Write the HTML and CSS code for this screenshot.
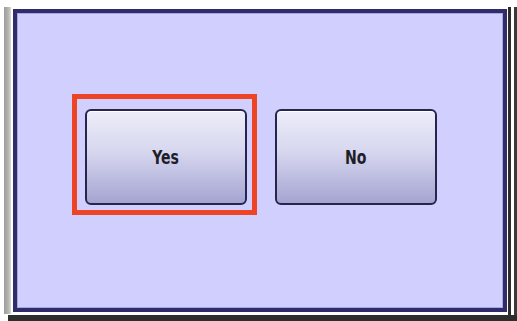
FILE: index.html
```html
<!DOCTYPE html>
<html>
<head>
<meta charset="utf-8">
<link rel="stylesheet" href="styles.css">
</head>
<body>
<div class="device">
  <div class="row">
    <div class="lstrip"></div>
    <div class="panel">
      <div class="choices">
        <div class="highlight">
          <div class="btn"><span class="label">Yes</span></div>
        </div>
        <div class="btn btn-no"><span class="label">No</span></div>
      </div>
    </div>
    <div class="rstrip"></div>
  </div>
  <div class="bbar"></div>
</div>
</body>
</html>
```
FILE: styles.css
```css
html, body {
  margin: 0;
  padding: 0;
  background: #ffffff;
}
.device {
  width: 517px;
  height: 321px;
  overflow: hidden;
  display: flex;
  flex-direction: column;
}
.row {
  display: flex;
  align-items: flex-start;
  padding-top: 7px;
  height: 308px;
}
.lstrip {
  margin-left: 4px;
  width: 7px;
  height: 307px;
  background: linear-gradient(90deg, #9c9c98 0%, #b4b4b0 60%, #d8d8d4 100%);
}
.panel {
  box-sizing: border-box;
  margin-left: 2px;
  margin-top: 2px;
  width: 495px;
  height: 303px;
  border: 4px solid #302c6a;
  background: #d0cffd;
  box-shadow: inset 0 0 0 1px #a8a6e0;
  padding: 81px 0 0 55px;
}
.choices {
  display: flex;
  align-items: flex-start;
}
.highlight {
  box-sizing: border-box;
  width: 185px;
  height: 121px;
  border: 5px solid #ec4424;
  padding: 10px 0 0 8px;
}
.btn {
  box-sizing: border-box;
  width: 162px;
  height: 96px;
  border: 2px solid #26264a;
  border-radius: 6px;
  background: linear-gradient(180deg, #ededf9 0%, #d6d6ef 45%, #a4a4d2 100%);
  box-shadow: inset 0 1px 0 #ffffff;
  display: flex;
  align-items: center;
  justify-content: center;
  font-family: "DejaVu Sans Condensed", "DejaVu Sans", sans-serif;
  font-stretch: condensed;
  font-weight: bold;
  font-size: 17px;
  color: #1e1e28;
}
.label {
  display: inline-block;
  transform: scale(0.92, 1.12);
}
.btn-no {
  margin-left: 18px;
  margin-top: 15px;
}
.rstrip {
  box-sizing: border-box;
  margin-left: 1px;
  width: 9px;
  height: 308px;
  border-left: 3px solid #2c2c2c;
  border-right: 3px solid #3a3a3a;
  background: #ffffff;
}
.bbar {
  margin-left: 8px;
  height: 6px;
  background: #2e2e2e;
}
```
